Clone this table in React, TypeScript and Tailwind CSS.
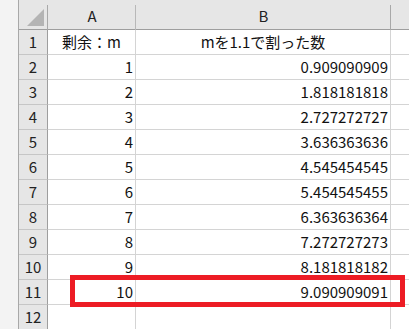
import React from 'react';

const rows: [string, string][] = [
    ['1', '0.909090909'],
    ['2', '1.818181818'],
    ['3', '2.727272727'],
    ['4', '3.636363636'],
    ['5', '4.545454545'],
    ['6', '5.454545455'],
    ['7', '6.363636364'],
    ['8', '7.272727273'],
    ['9', '8.181818182'],
    ['10', '9.090909091'],
];

const font = { fontFamily: '"Noto Sans CJK JP", "Noto Sans", sans-serif' };

function RowHead({ n }: { n: number }) {
    return (
        <div className="flex w-[29px] shrink-0 items-center justify-center border-r border-b border-r-[#9e9e9e] border-b-[#c6c6c6] bg-[#e6e6e6] text-[15px] text-[#222]">
            {n}
        </div>
    );
}

export default function App() {
    return (
        <div className="relative flex h-[329px] w-[409px] overflow-hidden bg-white text-[#111]" style={font}>
            {/* left margin strip */}
            <div className="w-[19px] shrink-0 border-r border-[#a8a8a8] bg-[#f3f3f3]" />

            <div className="flex flex-1 flex-col">
                {/* column headers */}
                <div className="flex h-[30px] shrink-0 border-b border-[#9e9e9e] bg-[#e6e6e6] text-[15px] text-[#222]">
                    <div className="relative w-[29px] shrink-0">
                        <svg className="absolute left-[8px] top-[9px]" width="18" height="18" viewBox="0 0 18 18">
                            <polygon points="17,0 17,17 0,17" fill="#b4b4b4" />
                        </svg>
                        <div className="absolute right-0 top-[5px] h-[25px] w-px bg-[#a8a8a8]" />
                    </div>
                    <div className="relative flex w-[88px] shrink-0 items-center justify-center pt-[4px]">
                        A
                        <div className="absolute right-0 top-[5px] h-[25px] w-px bg-[#b8b8b8]" />
                    </div>
                    <div className="relative flex w-[255px] shrink-0 items-center justify-center pt-[4px]">
                        B
                        <div className="absolute right-0 top-[5px] h-[25px] w-px bg-[#a8a8a8]" />
                    </div>
                    <div className="flex-1" />
                </div>

                {/* row 1: titles */}
                <div className="flex h-[25px] shrink-0">
                    <RowHead n={1} />
                    <div className="flex w-[88px] shrink-0 items-center justify-center border-r border-b border-[#d4d4d4] text-[15px]">
                        剰余：m
                    </div>
                    <div className="flex w-[255px] shrink-0 items-center justify-center border-r border-b border-[#d4d4d4] text-[15px]">
                        mを1.1で割った数
                    </div>
                    <div className="flex-1 border-b border-[#d4d4d4]" />
                </div>

                {rows.map(([m, v], i) => (
                    <div key={m} className="flex h-[25px] shrink-0">
                        <RowHead n={i + 2} />
                        <div className="flex w-[88px] shrink-0 items-center justify-end border-r border-b border-[#d4d4d4] pr-[2px] text-[15px]">
                            {m}
                        </div>
                        <div className="flex w-[255px] shrink-0 items-center justify-end border-r border-b border-[#d4d4d4] pr-[2px] text-[15px]">
                            {v}
                        </div>
                        <div className="flex-1 border-b border-[#d4d4d4]" />
                    </div>
                ))}

                {/* row 12: empty */}
                <div className="flex h-[25px] shrink-0">
                    <RowHead n={12} />
                    <div className="w-[88px] shrink-0 border-r border-b border-[#d4d4d4]" />
                    <div className="w-[255px] shrink-0 border-r border-b border-[#d4d4d4]" />
                    <div className="flex-1 border-b border-[#d4d4d4]" />
                </div>
            </div>

            {/* highlight box over row 11 */}
            <div className="absolute left-[70px] top-[275px] h-[32px] w-[335px] border-[5px] border-[#ed1c24]" />
        </div>
    );
}
